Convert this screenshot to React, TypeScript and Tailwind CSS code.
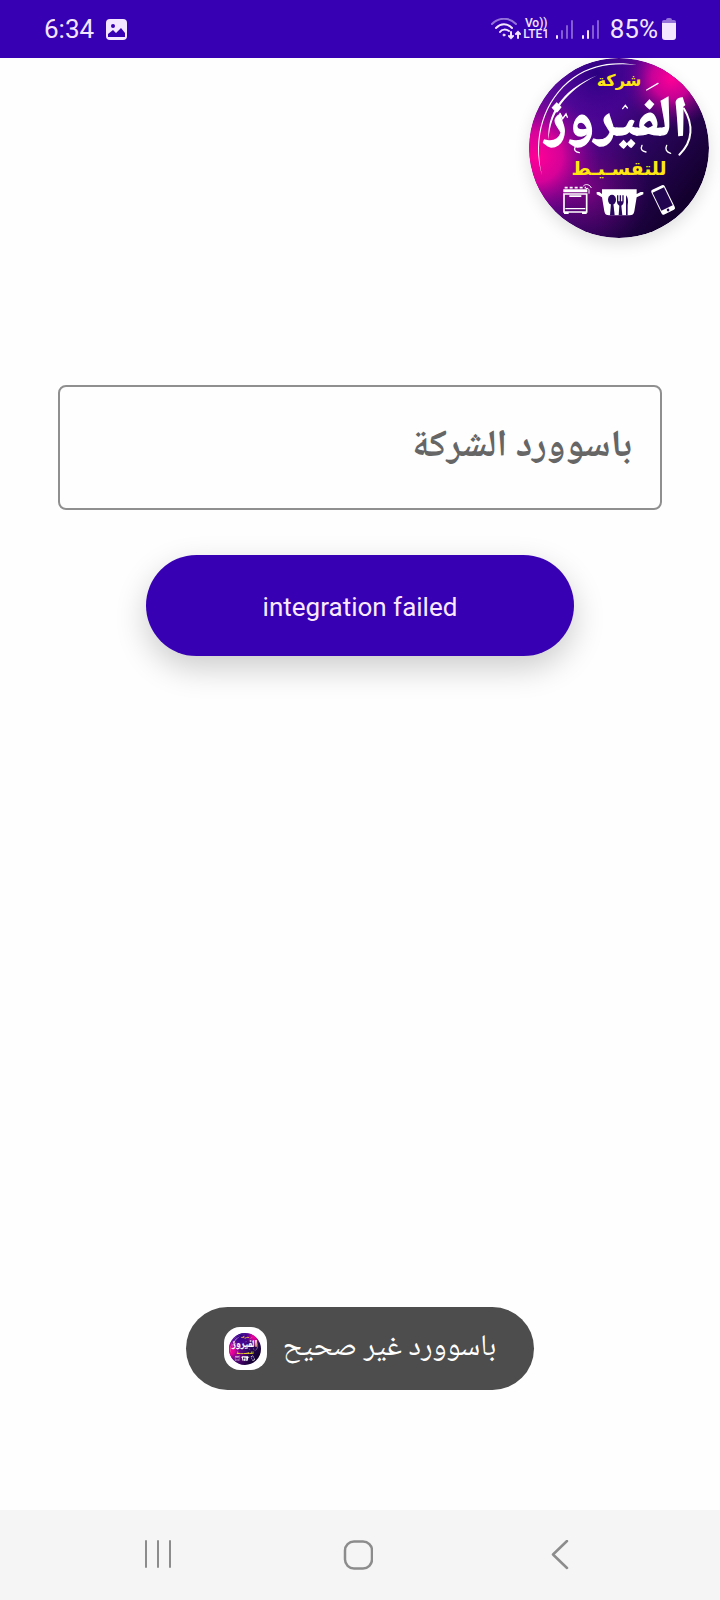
import { useId } from 'react';

const ARABIC_FONT = "font-['Noto_Naskh_Arabic','Noto_Sans_Arabic','DejaVu_Sans',sans-serif]";

/**
 * Round company badge: name, tagline and three appliance drawings
 */
function CompanyLogo({ className }: { className: string }) {
    const id = useId();

    return (
        <svg viewBox="27 24 540 540" className={className} role="img" aria-label="شركة الفيروز للتقسيط">
            <defs>
                <linearGradient id={`${id}base`} x1="0.1" y1="0.2" x2="0.85" y2="0.8">
                    <stop offset="0" stopColor="#5b0a9c" />
                    <stop offset="0.35" stopColor="#4a0591" />
                    <stop offset="0.6" stopColor="#2c0560" />
                    <stop offset="1" stopColor="#14002f" />
                </linearGradient>
                <radialGradient id={`${id}left`} gradientUnits="userSpaceOnUse" cx="50" cy="320" r="190">
                    <stop offset="0" stopColor="#ff0096" />
                    <stop offset="0.4" stopColor="#e4029a" stopOpacity="0.9" />
                    <stop offset="1" stopColor="#8a0090" stopOpacity="0" />
                </radialGradient>
                <radialGradient id={`${id}right`} gradientUnits="userSpaceOnUse" cx="455" cy="85" r="150">
                    <stop offset="0" stopColor="#ff0096" />
                    <stop offset="0.4" stopColor="#e0019c" stopOpacity="0.85" />
                    <stop offset="1" stopColor="#70008c" stopOpacity="0" />
                </radialGradient>
                <radialGradient id={`${id}glow`} gradientUnits="userSpaceOnUse" cx="200" cy="420" r="190">
                    <stop offset="0" stopColor="#8d0488" stopOpacity="0.8" />
                    <stop offset="1" stopColor="#5a0070" stopOpacity="0" />
                </radialGradient>
                <radialGradient id={`${id}blue`} gradientUnits="userSpaceOnUse" cx="230" cy="70" r="150">
                    <stop offset="0" stopColor="#2a0080" />
                    <stop offset="1" stopColor="#3a0090" stopOpacity="0" />
                </radialGradient>
            </defs>
            <circle cx="297" cy="294" r="270" fill={`url(#${id}base)`} />
            <circle cx="297" cy="294" r="270" fill={`url(#${id}glow)`} />
            <circle cx="297" cy="294" r="270" fill={`url(#${id}left)`} />
            <circle cx="297" cy="294" r="270" fill={`url(#${id}right)`} />
            <circle cx="297" cy="294" r="270" fill={`url(#${id}blue)`} />

            {/* Rim highlights */}
            <path d="M66 376C34 270 68 148 160 82C215 44 280 32 350 45C278 38 215 47 162 85C72 150 40 262 66 376Z" fill="#fff" />
            <path d="M86 270C80 200 118 122 232 76C136 124 90 190 86 270Z" fill="#fff" />

            <g fill="#ffe812" textAnchor="middle" className="font-['DejaVu_Sans',sans-serif] font-bold">
                <text x="297" y="108" fontSize="48">شركة</text>
                <text x="297" y="374" fontSize="56">للتقسـيـط</text>
            </g>
            <text
                x="290"
                y="258"
                fontSize="168"
                fill="#fff"
                stroke="#fff"
                strokeWidth="4"
                textAnchor="middle"
                className={`${ARABIC_FONT} font-bold`}
            >
                الفيروز
            </text>

            {/* Ornaments around the name */}
            <g fill="none" stroke="#fff" strokeWidth="4" strokeLinecap="round">
                <path d="M120 190l8 16 10-14 4 10" />
                <path d="M492 176c28 46 28 98-14 138" strokeWidth="6" />
                <path d="M380 120l34-20" />
                <path d="M308 176l8-10 6 8" />
                <path d="M166 290c-6 10 0 16 12 18" />
                <path d="M440 286c-6 12 0 20 12 24" />
                <path d="M366 286c-6 12 0 18 12 20" />
            </g>

            {/* Stove */}
            <g fill="none" stroke="#fff" strokeWidth="5">
                <path d="M132 432h68v54h-68z" />
                <path d="M130 422h72" strokeWidth="9" />
                <path d="M134 413h64" strokeDasharray="9 6" />
                <path d="M190 408c8-8 20-4 24 6M198 416c4-3 9 0 9 5v10" strokeWidth="3" />
            </g>
            <path d="M132 486h14v6h-14zM186 486h14v6h-14zM148 436h36v5h-36zM136 474h60v4h-60z" fill="#fff" />

            {/* Pot with cutlery */}
            <path d="M246 418h104v14l12-6 8 0v7l-20 9-7 42c-2 9-6 12-14 12h-62c-8 0-12-3-14-12l-7-42-16-9v-7h8l8 6z" fill="#fff" />
            <g fill="#2b075f">
                <ellipse cx="276" cy="449" rx="12" ry="15" />
                <path d="M273 460h7l4 36h-14z" />
                <path d="M291 436h4v18h4v-18h4v18h4v-18h4v20q0 8-7 11l3 29h-11l2-29q-7-3-7-11z" />
                <path d="M318 436q9 10 5 30v30h-5z" />
            </g>

            {/* Phone */}
            <g transform="rotate(-26 428 449)">
                <rect x="407" y="409" width="44" height="82" rx="6" fill="#fff" />
                <rect x="410" y="417" width="38" height="60" fill="#220550" />
                <circle cx="429" cy="484" r="4" fill="#220550" />
            </g>
        </svg>
    );
}

function SignalBars({ level }: { level: number }) {
    return (
        <svg viewBox="0 0 18 20" className="h-5 w-[18px]" fill="#f4e6ff" aria-hidden="true">
            {[4, 9, 14, 19].map((height, i) => (
                <rect
                    key={height}
                    x={i * 5}
                    y={20 - height}
                    width="2"
                    height={height}
                    rx="1"
                    opacity={i < level ? 1 : 0.4}
                />
            ))}
        </svg>
    );
}

function StatusBar() {
    return (
        <header className="flex h-[58px] items-center justify-between bg-[#3700b3] px-11 font-[Roboto,sans-serif] text-[26px] leading-8 text-[#f4e6ff]">
            <div className="flex items-center gap-3">
                <time>6:34</time>
                <svg viewBox="0 0 21 21" className="size-[21px]" aria-hidden="true">
                    <rect width="21" height="21" rx="4" fill="#f4e6ff" />
                    <circle cx="7" cy="7" r="2" fill="#3700b3" />
                    <path d="M2 18v-3l5-4 3 3 5-5 4 5v4z" fill="#3700b3" />
                </svg>
            </div>
            <div className="flex items-center">
                <svg viewBox="0 0 30 22" className="h-[22px] w-[30px]" fill="none" stroke="#f4e6ff" strokeLinecap="round" aria-hidden="true">
                    <path d="M1 6C8-1 18-1 25 6" strokeWidth="2" opacity="0.5" />
                    <path d="M5 10c5-5 11-5 16 0M9 14c2-3 6-3 9-1" strokeWidth="2" />
                    <circle cx="13" cy="17" r="1" fill="#f4e6ff" />
                    <path d="M20 14v6m-2-2l2 2 2-2M27 20v-6m-2 2l2-2 2 2" strokeWidth="2" />
                </svg>
                <span className="ml-0.5 flex w-[27px] flex-col items-center text-[12px] leading-[11px] font-medium">
                    <span>Vo))</span>
                    <span>LTE1</span>
                </span>
                <span className="ml-1.5 flex gap-2">
                    <SignalBars level={1} />
                    <SignalBars level={2} />
                </span>
                <span className="ml-2.5">85%</span>
                <svg viewBox="0 0 14 22" className="ml-1 h-[22px] w-3.5" fill="#f4e6ff" aria-hidden="true">
                    <path d="M4 2q0-2 2-2h2q2 0 2 2h2q2 0 2 2v3H0V4q0-2 2-2z" opacity="0.5" />
                    <path d="M0 5h14v14q0 3-3 3H3q-3 0-3-3z" />
                </svg>
            </div>
        </header>
    );
}

function Toast() {
    return (
        <div role="status" className="mx-auto mt-auto mb-[120px] flex h-[83px] items-center gap-4 rounded-full bg-[#4d4d4d] px-[38px]">
            <span className="flex size-[43px] items-center justify-center rounded-2xl bg-white">
                <CompanyLogo className="size-8" />
            </span>
            <span dir="rtl" className={`${ARABIC_FONT} text-[30px] leading-10 text-white`}>
                باسوورد غير صحيح
            </span>
        </div>
    );
}

function NavigationBar() {
    const button = 'flex flex-1 items-center justify-center';

    return (
        <nav className="flex h-[90px] bg-[#f5f5f5] pr-[59px] pl-[55px] text-[#8c8c8c]">
            <button type="button" aria-label="Recent apps" className={button}>
                <svg viewBox="0 0 30 30" className="size-[30px]" fill="none" stroke="currentColor" strokeWidth="2" strokeLinecap="round">
                    <path d="M5 1v26M17 1v26M29 1v26" />
                </svg>
            </button>
            <button type="button" aria-label="Home" className={button}>
                <svg viewBox="0 0 30 30" className="size-[30px]" fill="none" stroke="currentColor" strokeWidth="2.5">
                    <rect x="2" y="1.5" width="27" height="27" rx="9" />
                </svg>
            </button>
            <button type="button" aria-label="Back" className={button}>
                <svg viewBox="0 0 30 30" className="size-[30px]" fill="none" stroke="currentColor" strokeWidth="2.5" strokeLinecap="round" strokeLinejoin="round">
                    <path d="M22 1L8 14.500l14 13.500" />
                </svg>
            </button>
        </nav>
    );
}

export default function App() {
    return (
        <div className="flex min-h-screen flex-col bg-[#fefefe]">
            <StatusBar />
            <main className="flex flex-1 flex-col">
                <div className="flex justify-end pr-[11px]">
                    <CompanyLogo className="size-[180px] rounded-full shadow-[0_6px_16px_rgba(0,0,0,0.12)]" />
                </div>
                <form className="mt-[147px] flex flex-col items-center px-[58px]" onSubmit={(e) => e.preventDefault()}>
                    <input
                        type="password"
                        dir="rtl"
                        aria-label="باسوورد الشركة"
                        placeholder="باسوورد الشركة"
                        className={`${ARABIC_FONT} h-[125px] w-full rounded-lg border-2 border-[#8f8f8f] bg-transparent px-7 text-[38px] font-bold text-[#666666] placeholder:text-[#666666]`}
                    />
                    <button
                        type="submit"
                        className="mt-[45px] h-[101px] w-[428px] max-w-full rounded-full bg-[#3700b3] pt-1 font-[Roboto,sans-serif] text-[26px] text-[#fbeaff] shadow-[0_12px_32px_rgba(0,0,0,0.2)]"
                    >
                        integration failed
                    </button>
                </form>
                <Toast />
            </main>
            <NavigationBar />
        </div>
    );
}
